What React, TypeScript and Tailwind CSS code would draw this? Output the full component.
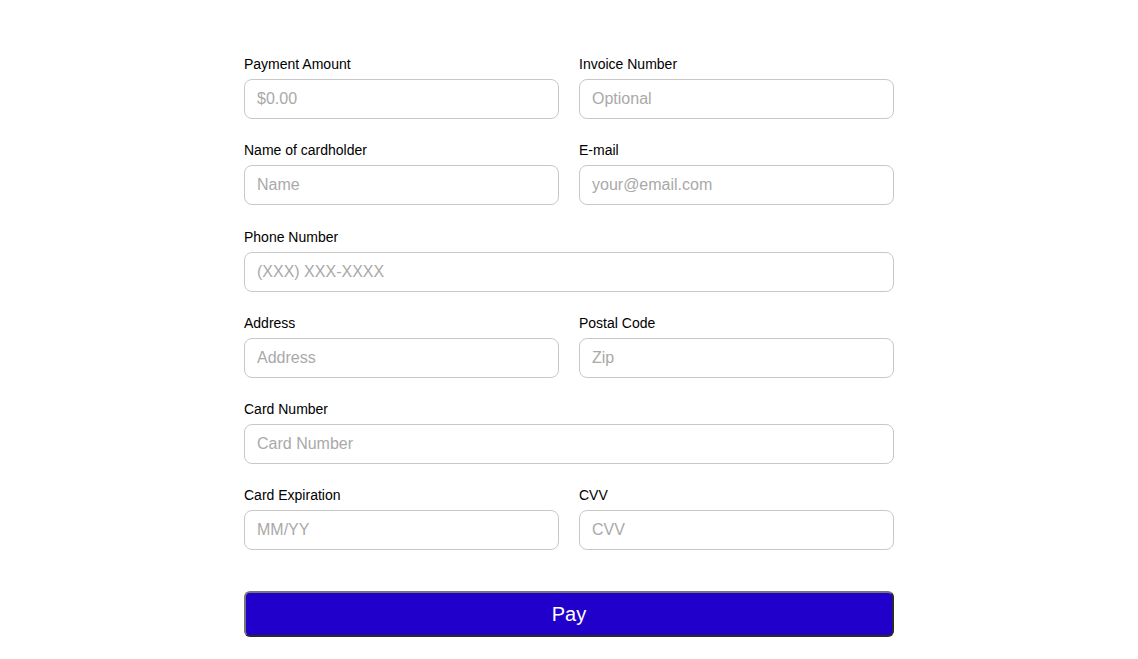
import React from 'react'

type Field = { label: string; placeholder: string; full?: boolean }

const fields: Field[] = [
  { label: 'Payment Amount', placeholder: '$0.00' },
  { label: 'Invoice Number', placeholder: 'Optional' },
  { label: 'Name of cardholder', placeholder: 'Name' },
  { label: 'E-mail', placeholder: 'your@email.com' },
  { label: 'Phone Number', placeholder: '(XXX) XXX-XXXX', full: true },
  { label: 'Address', placeholder: 'Address' },
  { label: 'Postal Code', placeholder: 'Zip' },
  { label: 'Card Number', placeholder: 'Card Number', full: true },
  { label: 'Card Expiration', placeholder: 'MM/YY' },
  { label: 'CVV', placeholder: 'CVV' },
]

export default function App() {
  return (
    <div className="min-h-screen bg-white font-['Liberation_Sans',Arial,sans-serif] text-black">
      <div className="mx-auto w-[650px] pt-[56px]">
        <form className="grid grid-cols-2 gap-x-5 gap-y-[23.3px]" onSubmit={e => e.preventDefault()}>
          {fields.map(f => (
            <div key={f.label} className={f.full ? 'col-span-2' : ''}>
              <label className="mb-[6px] block text-[14px] leading-[17px]">{f.label}</label>
              <input
                placeholder={f.placeholder}
                className="block h-[40px] w-full rounded-[8px] border border-[#c8c8c8] px-[12px] text-[16px] outline-none placeholder:text-[#a9a9a9]"
              />
            </div>
          ))}
        </form>
        <button
          type="button"
          className="mt-[41px] h-[46px] w-full rounded-[6px] border-2 border-t-[#767676] border-l-[#767676] border-r-[#2a2a2a] border-b-[#2a2a2a] bg-[#2200cc] text-[20px] text-white"
        >
          Pay
        </button>
      </div>
    </div>
  )
}
